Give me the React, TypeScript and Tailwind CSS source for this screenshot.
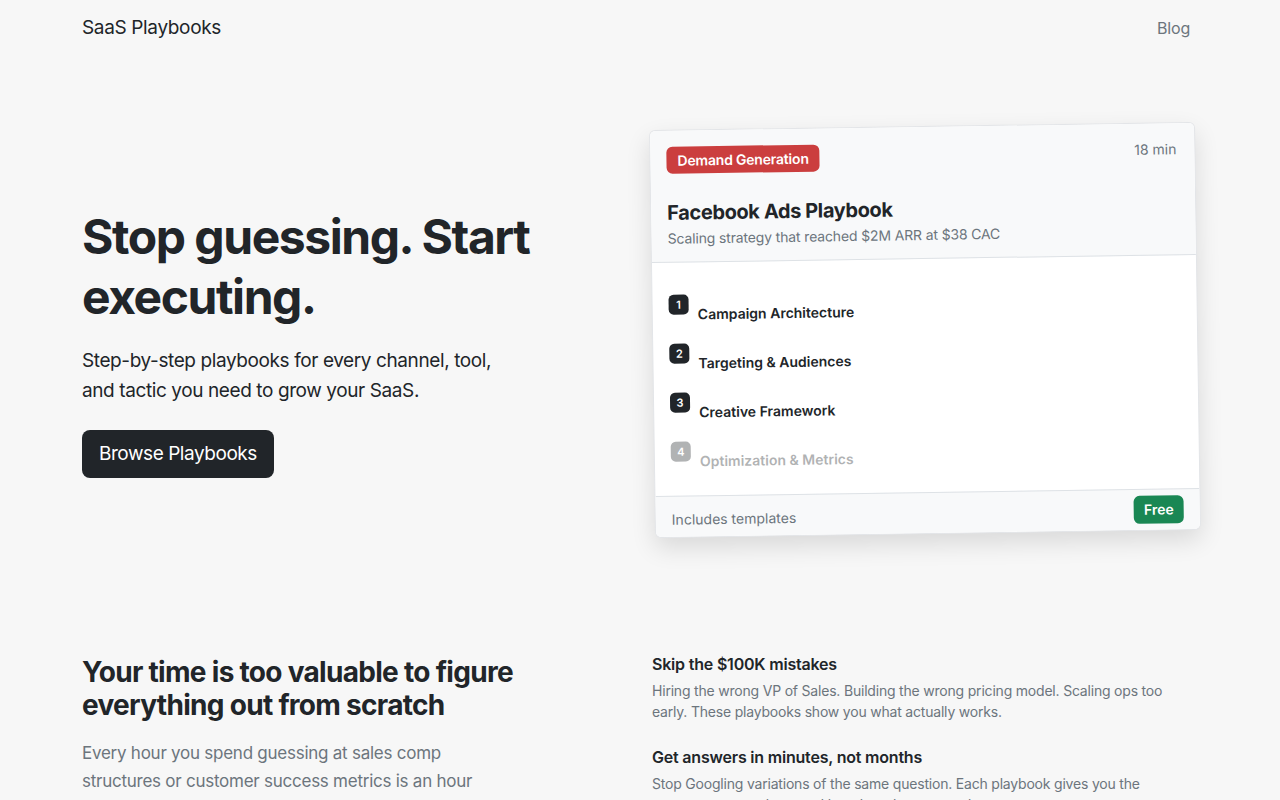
const steps = [
  { n: 1, label: 'Campaign Architecture', muted: false },
  { n: 2, label: 'Targeting & Audiences', muted: false },
  { n: 3, label: 'Creative Framework', muted: false },
  { n: 4, label: 'Optimization & Metrics', muted: true },
];

const benefits = [
  {
    title: 'Skip the $100K mistakes',
    body: 'Hiring the wrong VP of Sales. Building the wrong pricing model. Scaling ops too early. These playbooks show you what actually works.',
  },
  {
    title: 'Get answers in minutes, not months',
    body: 'Stop Googling variations of the same question. Each playbook gives you the exact steps, templates and benchmarks you need.',
  },
];

function PlaybookCard() {
  return (
    <div className="w-[546px] shrink-0 rotate-[-0.85deg] rounded-md border border-[#e3e5e8] bg-white shadow-[0_10px_24px_rgba(0,0,0,0.12)] overflow-hidden">
      {/* Header */}
      <div className="bg-[#f8f9fa] border-b border-[#dee2e6] px-4 pt-4 pb-[13px]">
        <div className="flex items-start justify-between">
          <span className="rounded-md bg-[#cb3e3e] px-[11px] py-[4px] text-sm font-semibold text-white leading-[19px] tracking-[-0.2px]">
            Demand Generation
          </span>
          <span className="text-sm text-[#6c757d] mr-[2px]">18 min</span>
        </div>
        <h3 className="mt-[25px] text-[20px] font-bold leading-[28px] tracking-[-0.4px] text-[#212529]">Facebook Ads Playbook</h3>
        <p className="mt-[2px] text-sm tracking-[-0.15px] text-[#6c757d]">Scaling strategy that reached $2M ARR at $38 CAC</p>
      </div>

      {/* Steps */}
      <ul className="flex flex-col gap-[19px] px-4 pt-[32px] pb-[24px]">
        {steps.map((s) => (
          <li key={s.n} className={`flex items-start gap-[9px] ${s.muted ? 'opacity-35' : ''}`}>
            <span className="flex h-[20px] w-[20px] shrink-0 items-center justify-center rounded-[5px] bg-[#212529] text-[11px] font-semibold text-white">
              {s.n}
            </span>
            <span className="pt-[10px] text-sm font-semibold leading-[20px] text-[#212529]">{s.label}</span>
          </li>
        ))}
      </ul>

      {/* Footer */}
      <div className="flex items-center justify-between border-t border-[#dee2e6] bg-[#f8f9fa] px-4 py-[6px]">
        <span className="pt-[6px] text-sm text-[#6c757d]">Includes templates</span>
        <span className="rounded-md bg-[#1a8754] px-[10px] py-[4px] text-sm font-semibold leading-[20px] text-white">Free</span>
      </div>
    </div>
  );
}

export default function App() {
  return (
    <div className="min-h-screen bg-[#f7f7f7] font-['Inter',sans-serif] text-[#212529]">
      <div className="ml-[82px] w-[1108px]">
        {/* Nav */}
        <header className="flex h-[56px] items-center justify-between">
          <span className="pt-[1px] text-[19px] tracking-[-0.35px] text-[#212529]">SaaS Playbooks</span>
          <a href="#" className="text-base tracking-[-0.2px] text-[#6c757d]">Blog</a>
        </header>

        {/* Hero */}
        <section className="grid grid-cols-2 gap-8 pt-[70px] pb-[118px]">
          <div className="flex flex-col justify-center pt-[24px]">
            <h1 className="text-[48px] font-bold leading-[60px] tracking-[-1.45px] text-[#212529]">
              Stop guessing. Start executing.
            </h1>
            <p className="mt-[19px] w-[430px] text-[19px] leading-[30px] tracking-[-0.4px] text-[#212529]">
              Step-by-step playbooks for every channel, tool, and tactic you need to grow your SaaS.
            </p>
            <div className="mt-[24px]">
              <button className="rounded-lg bg-[#212529] px-[17px] py-[9px] text-[19px] leading-[30px] tracking-[-0.45px] text-white">
                Browse Playbooks
              </button>
            </div>
          </div>
          <div className="flex items-center">
            <PlaybookCard />
          </div>
        </section>

        {/* Why section */}
        <section className="grid grid-cols-2 gap-8">
          <div className="pt-[4px]">
            <h2 className="w-[460px] text-[28px] font-bold leading-[33px] tracking-[-0.7px] text-[#212529]">
              Your time is too valuable to figure everything out from scratch
            </h2>
            <p className="mt-[17px] w-[418px] text-[17px] leading-[28px] tracking-[-0.25px] text-[#6c757d]">
              Every hour you spend guessing at sales comp structures or customer success metrics is an hour you are not spending on growth.
            </p>
          </div>
          <div className="flex flex-col gap-[23px]">
            {benefits.map((b) => (
              <div key={b.title}>
                <h3 className="text-base font-semibold leading-[24px] tracking-[-0.2px] text-[#212529]">{b.title}</h3>
                <p className="mt-[4px] w-[515px] text-sm leading-[21px] tracking-[-0.2px] text-[#6c757d]">{b.body}</p>
              </div>
            ))}
          </div>
        </section>
      </div>
    </div>
  );
}
